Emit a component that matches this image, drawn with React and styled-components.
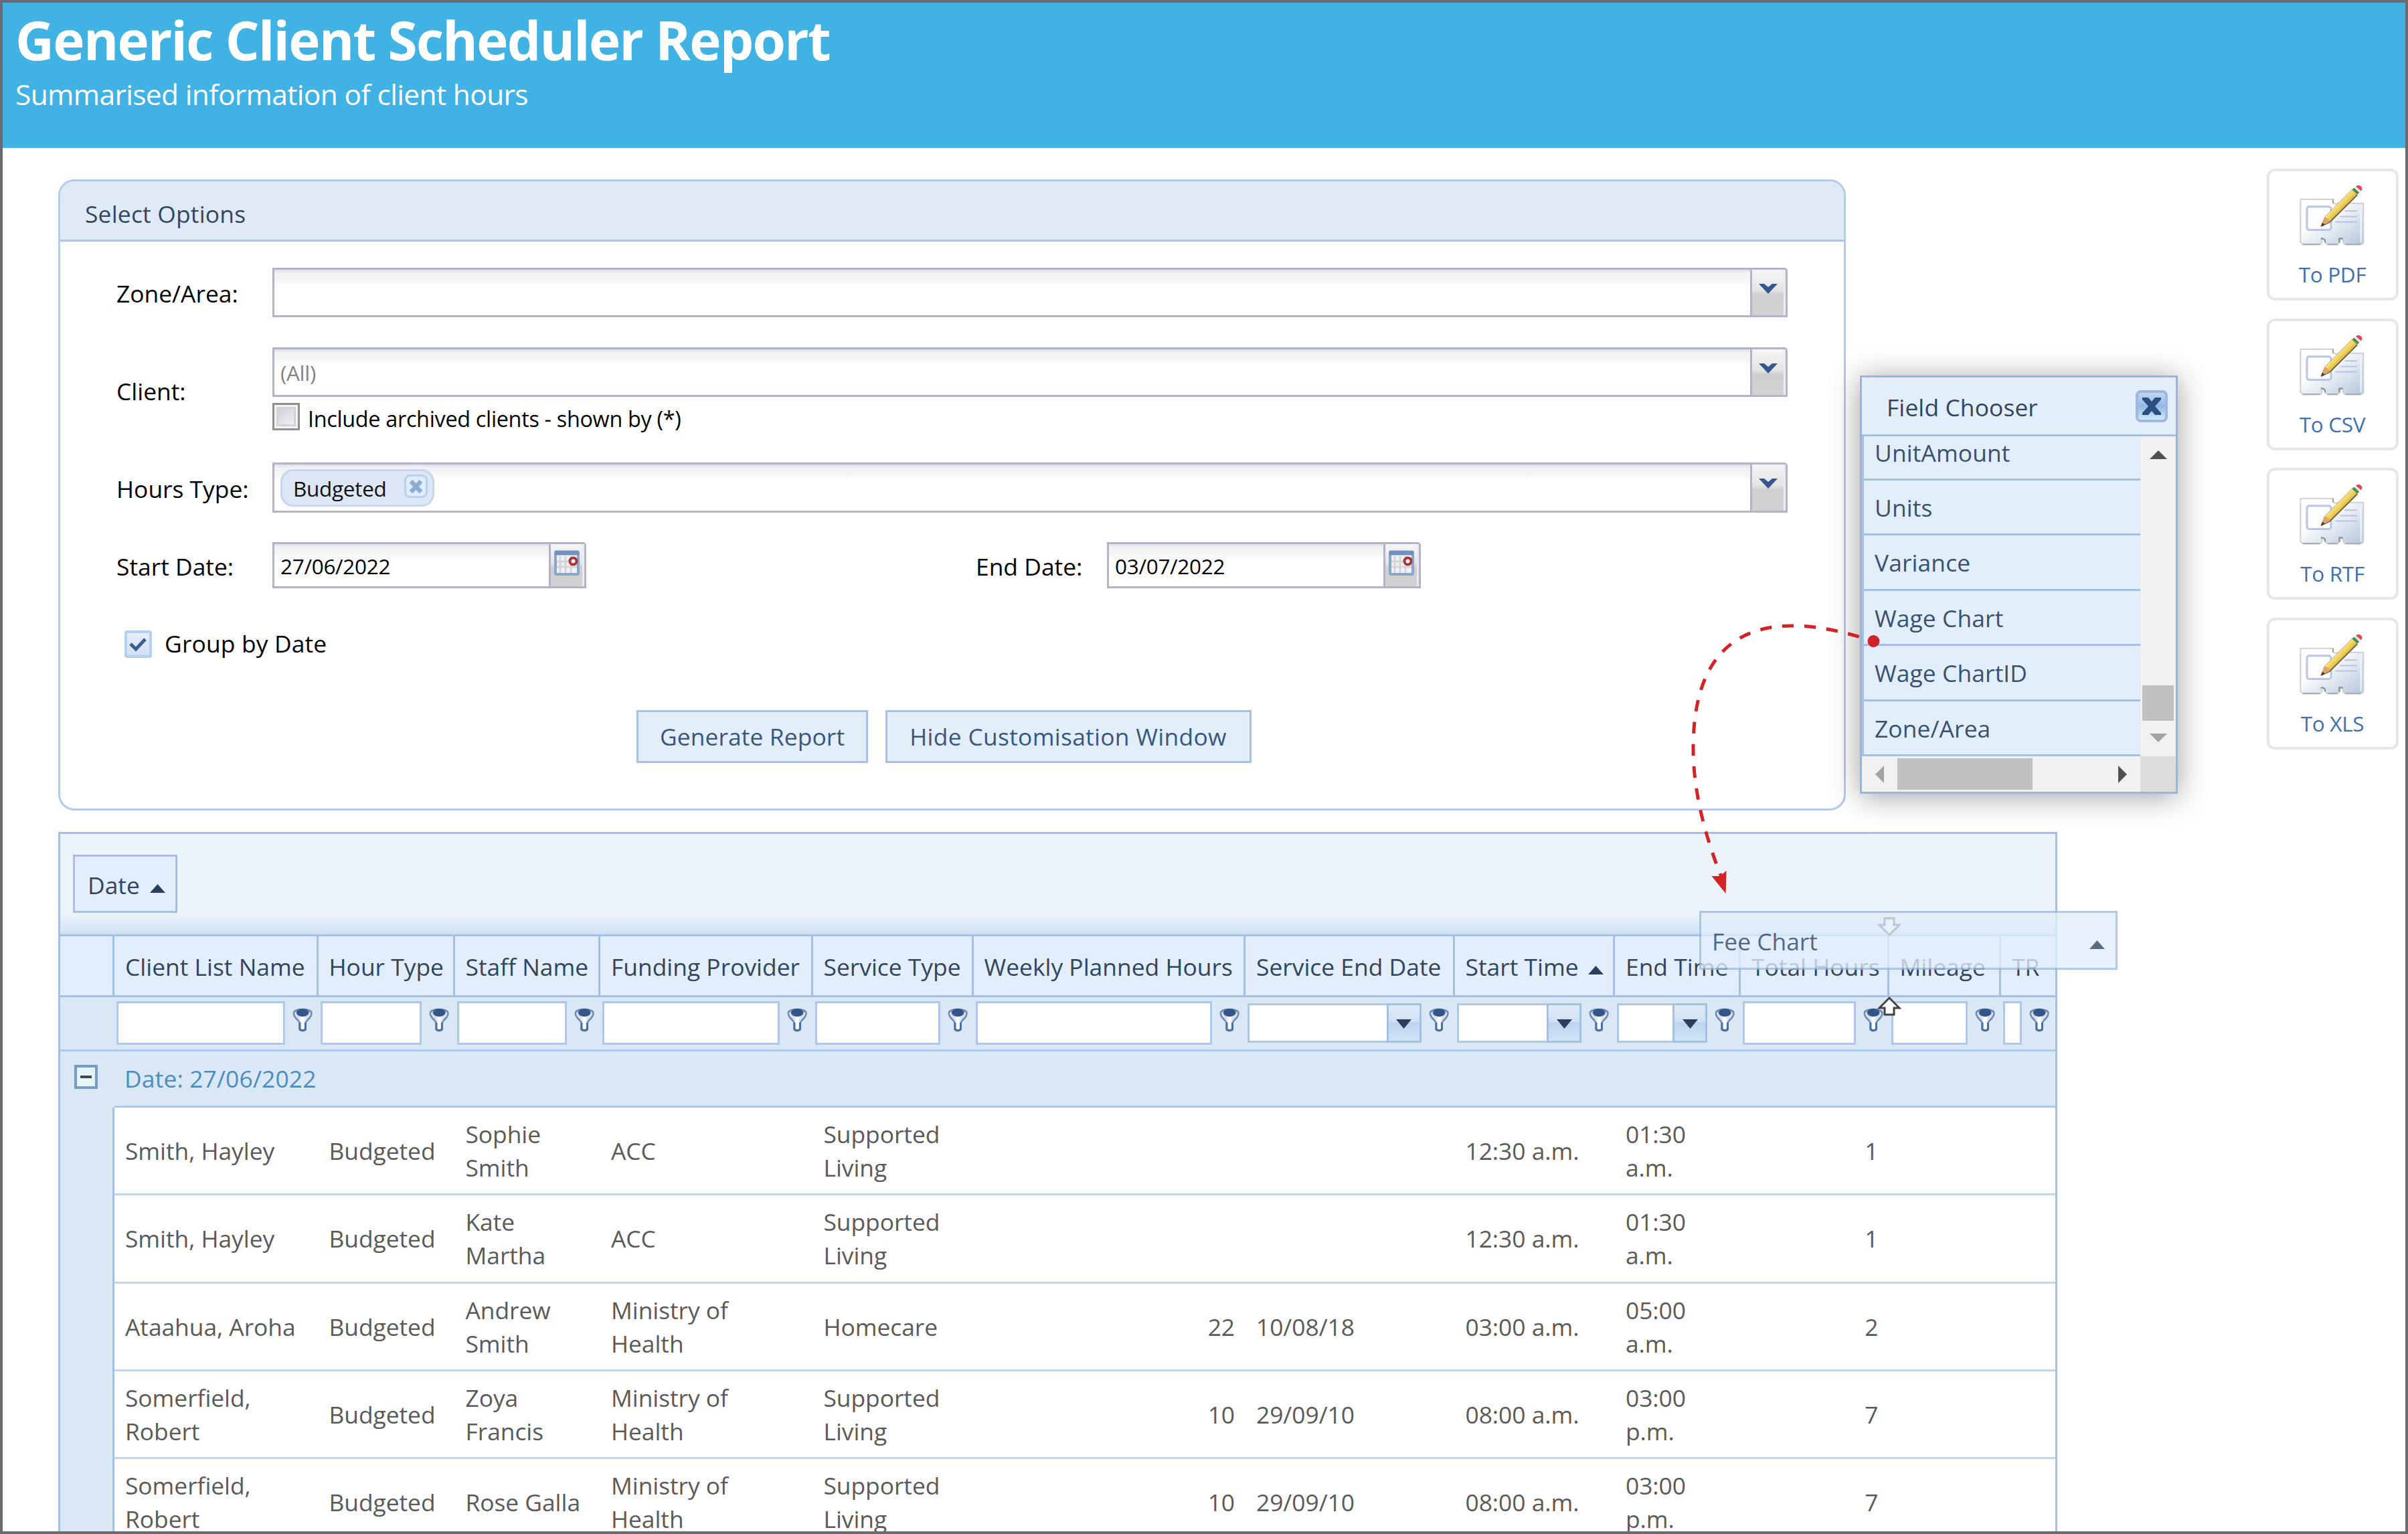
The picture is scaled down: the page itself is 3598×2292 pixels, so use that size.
import React, { useState } from 'react'
import styled, { createGlobalStyle, css } from 'styled-components'

const columns = [
  { title: 'Client List Name', width: 304.5, filter: 'text' },
  { title: 'Hour Type', width: 204, filter: 'text' },
  { title: 'Staff Name', width: 217.5, filter: 'text' },
  { title: 'Funding Provider', width: 317.5, filter: 'text' },
  { title: 'Service Type', width: 240, filter: 'text' },
  { title: 'Weekly Planned Hours', width: 406.5, filter: 'text', right: true },
  { title: 'Service End Date', width: 312.5, filter: 'combo' },
  { title: 'Start Time', width: 239.5, filter: 'combo', sorted: true },
  { title: 'End Time', width: 188, filter: 'combo' },
  { title: 'Total Hours', width: 221.5, filter: 'text', right: true },
  { title: 'Mileage', width: 167.5, filter: 'text' },
  { title: 'TR', width: 81, filter: 'text' },
]

const template = '81px ' + columns.map((c) => c.width + 'px').join(' ')

const rows = [
  ['Smith, Hayley', 'Budgeted', 'Sophie Smith', 'ACC', 'Supported Living', '', '', '12:30 a.m.', '01:30 a.m.', '1', '', ''],
  ['Smith, Hayley', 'Budgeted', 'Kate Martha', 'ACC', 'Supported Living', '', '', '12:30 a.m.', '01:30 a.m.', '1', '', ''],
  ['Ataahua, Aroha', 'Budgeted', 'Andrew Smith', 'Ministry of Health', 'Homecare', '22', '10/08/18', '03:00 a.m.', '05:00 a.m.', '2', '', ''],
  ['Somerfield, Robert', 'Budgeted', 'Zoya Francis', 'Ministry of Health', 'Supported Living', '10', '29/09/10', '08:00 a.m.', '03:00 p.m.', '7', '', ''],
  ['Somerfield, Robert', 'Budgeted', 'Rose Galla', 'Ministry of Health', 'Supported Living', '10', '29/09/10', '08:00 a.m.', '03:00 p.m.', '7', '', ''],
]

const fields = ['UnitAmount', 'Units', 'Variance', 'Wage Chart', 'Wage ChartID', 'Zone/Area']

const exportsList = ['To PDF', 'To CSV', 'To RTF', 'To XLS']

const GlobalStyle = createGlobalStyle`
  *{
    box-sizing:border-box;
  }
  body{
    margin:0;
    background:#fff;
    font-family:"Open Sans", "Noto Sans", sans-serif;
    font-size:35.4px;
    line-height:50px;
    color:#000;
  }
`

const Page = styled.div`
  position:relative;
  width:3598px;
  height:2292px;
  overflow:hidden;
  border:4px solid #6a6a6f;
  background:#fff;
`

const Banner = styled.header`
  height:217px;
  padding:2px 0 0 19px;
  background:#40b2e4;
  color:#fff;
  h1{
    margin:0;
    font-size:80px;
    font-weight:700;
    line-height:106px;
    letter-spacing:-1.75px;
  }
  p{
    margin:0;
    font-size:42.5px;
    line-height:58px;
    letter-spacing:-0.65px;
  }
`

const Body = styled.div`
  display:flex;
  justify-content:space-between;
  align-items:flex-start;
  padding:31px 10px 0 83px;
`

const Main = styled.main`
  width:2987px;
  padding-top:16px;
`

const Panel = styled.section`
  width:2671px;
  height:943px;
  border:3px solid #b0cbeb;
  border-radius:24px;
  overflow:hidden;
`

const PanelTitle = styled.div`
  height:90px;
  padding:23px 0 0 37px;
  border-bottom:3px solid #a9c7ea;
  background:#e0eaf6;
  color:#34475e;
  letter-spacing:0.2px;
`

const Form = styled.div`
  padding:39px 84px 0 84px;
`

const FormRow = styled.div`
  display:flex;
  align-items:center;
  height:${(p) => p.$height}px;
  margin-bottom:${(p) => p.$gap}px;
`

const Label = styled.label`
  width:${(p) => p.$width || 233}px;
  flex-shrink:0;
  padding-top:${(p) => p.$drop || 0}px;
`

const Stack = styled.div`
  display:flex;
  flex-direction:column;
  gap:10px;
  flex:1;
`

const Field = styled.div`
  display:flex;
  align-items:stretch;
  width:${(p) => (p.$date ? '469px' : '2264px')};
  height:${(p) => p.$height || 74}px;
  border:3px solid #b3b4c9;
  border-top-right-radius:5px;
  background:linear-gradient(#dde1e5 0, #f0f2f3 5px, #f4f6f6 15px, #fff 24px);
`

const FieldText = styled.div`
  flex:1;
  display:flex;
  align-items:center;
  padding:${(p) => (p.$chip ? '0 0 0 9px' : '2px 0 0 9px')};
  font-size:31.5px;
  letter-spacing:-0.3px;
  color:${(p) => (p.$muted ? '#838383' : '#000')};
`

const FieldButton = styled.button`
  width:53px;
  padding:0 2px 0 0;
  border:0;
  border-left:3px solid #b3b4c9;
  background:linear-gradient(#f6f6f6, #e4e4e4 45%, #cfcfcf 55%, #d2d2d2);
  box-shadow:inset -3px 0 0 #ececec;
  display:flex;
  justify-content:center;
  svg{
    margin-top:${(p) => (p.$date ? 8 : 20)}px;
  }
`

const Chip = styled.span`
  display:flex;
  align-items:center;
  justify-content:space-between;
  width:230px;
  height:56px;
  padding:2px 7px 0 16px;
  border:3px solid #c6d6f0;
  border-radius:19px;
  background:#dce6f5;
  color:#111;
  svg{
    margin-top:-6px;
  }
`

const CheckLine = styled.div`
  display:flex;
  align-items:center;
  gap:12px;
  height:40px;
  font-size:32.4px;
  letter-spacing:-0.32px;
  span:last-child{
    padding-top:5px;
  }
`

const ArchiveBox = styled.span`
  width:41px;
  height:41px;
  border:3px solid #8f8f8f;
  background:linear-gradient(135deg, #c6cad6, #f8f8f8) padding-box;
  box-shadow:inset 0 0 0 3px #f3f3f3, inset 0 0 0 6px #d3d3d6;
`

const GroupBox = styled.span`
  display:flex;
  align-items:center;
  justify-content:center;
  width:41px;
  height:41px;
  margin-left:12px;
  border:4px solid #b6cfee;
  border-radius:4px;
  background:linear-gradient(#e6f0fb, #d0e0f4);
`

const GroupLabel = styled.span`
  padding:0 0 3px 19px;
  letter-spacing:0.15px;
`

const Actions = styled.div`
  display:flex;
  gap:25.5px;
  padding-left:777px;
`

const Button = styled.button`
  width:${(p) => p.$width}px;
  height:79px;
  padding:0 0 1px;
  border:3px solid #a4c1e8;
  background:#e2effb;
  color:#3a5680;
  font:inherit;
  letter-spacing:${(p) => p.$tracking || 0.1}px;
`

const Grid = styled.section`
  margin-top:32px;
  width:2987px;
  border:3px solid #a3c0e7;
  border-bottom:0;
  color:#32455e;
`

const GroupPanel = styled.div`
  height:153px;
  padding:31px 0 0 19px;
  border-bottom:3px solid #a3c0e7;
  background:linear-gradient(#ecf3fb 0, #ecf3fb 120px, #dfebf8 133px, #cde2f5 150px);
`

const GroupTag = styled.div`
  display:flex;
  align-items:center;
  gap:15px;
  width:156px;
  height:87px;
  padding:2px 0 0 19px;
  border:3px solid #a3c0e7;
  background:#e2eefb;
  svg{
    margin-top:12px;
  }
`

const HeadRow = styled.div`
  display:grid;
  grid-template-columns:${template};
  height:90.5px;
  border-bottom:3px solid #a3c0e7;
  background:#e2eefb;
`

const HeadCell = styled.div`
  display:flex;
  align-items:center;
  padding:2px 0 0 16px;
  border-right:3px solid #a3c0e7;
  white-space:nowrap;
  &:last-child{
    border-right:0;
  }
  svg{
    margin:12px 0 0 14px;
  }
`

const FilterRow = styled.div`
  display:grid;
  grid-template-columns:${template};
  height:81.5px;
  border-bottom:3px solid #adc8ea;
  background:#dae8f6;
`

const FilterCell = styled.div`
  display:flex;
  align-items:flex-start;
  gap:11px;
  padding:6px 8px 0 3px;
  svg{
    flex-shrink:0;
  }
`

const FunnelIcon = styled.svg`
  width:31px;
  height:37px;
  margin-top:9px;
`

const inputLook = css`
  flex:1;
  min-width:0;
  border:3px solid #adc8ea;
  background:#fff;
`

const FilterInput = styled.input`
  ${inputLook}
  height:65px;
  padding:0;
`

const FilterCombo = styled.div`
  ${inputLook}
  display:flex;
  justify-content:flex-end;
  height:59px;
  margin-top:3px;
`

const ComboButton = styled.span`
  display:flex;
  align-items:center;
  justify-content:center;
  width:52px;
  margin:-3px;
  border:3px solid #a3c0e7;
  background:linear-gradient(#dfebf8, #d0e1f5 45%, #bdd4ef 50%, #cfe4f7);
  svg{
    margin-top:3px;
  }
`

const GroupRow = styled.div`
  display:grid;
  grid-template-columns:81px 1fr;
  height:84px;
  background:#dae8f6;
  color:#4b8dc0;
`

const Toggle = styled.div`
  padding:17px 0 0 21px;
`

const GroupTitle = styled.div`
  display:flex;
  align-items:center;
  padding:0 0 1px 15px;
  letter-spacing:0.15px;
  border-bottom:3px solid #adc8ea;
`

const DataRow = styled.div`
  display:grid;
  grid-template-columns:${template};
  height:131.25px;
  color:#5a5a5a;
`

const Indent = styled.div`
  border-right:3px solid #a3c0e7;
  background:#dae8f6;
`

const DataCell = styled.div`
  display:flex;
  align-items:center;
  justify-content:${(p) => (p.$right ? 'flex-end' : 'flex-start')};
  padding:${(p) => (p.$right ? '0 16px 0 0' : '0 28px 0 16px')};
  border-bottom:3px solid #c2d7f0;
  letter-spacing:-0.05px;
`

const Exports = styled.aside`
  display:flex;
  flex-direction:column;
  gap:26.5px;
`

const ExportCard = styled.button`
  display:flex;
  flex-direction:column;
  align-items:center;
  width:197px;
  height:197px;
  padding:20px 1px 0 0;
  border:4px solid #e9e6e6;
  border-radius:12px;
  background:#fff;
  color:#3f70ac;
  font:inherit;
  font-size:31.5px;
  letter-spacing:-0.3px;
  span{
    margin-top:21px;
    line-height:42px;
  }
`

// floating customisation window
const Chooser = styled.div`
  position:absolute;
  left:2775px;
  top:557px;
  width:475px;
  height:625px;
  border:3px solid #94b6e2;
  background:#e2effb;
  box-shadow:0 4px 42px rgba(0, 0, 0, 0.38);
  color:#3a5170;
`

const ChooserTitle = styled.div`
  display:flex;
  justify-content:space-between;
  align-items:center;
  height:88px;
  padding:2px 11px 2px 37px;
  border-bottom:3px solid #a3c0e7;
  color:#32455e;
  letter-spacing:0.1px;
  span{
    padding-top:2px;
  }
`

const ChooserBody = styled.div`
  display:grid;
  grid-template-columns:416px 53px;
  grid-template-rows:478px 53px;
`

const FieldList = styled.div`
  display:flex;
  flex-direction:column;
  justify-content:flex-end;
  overflow:hidden;
  border-left:3px solid #a3c0e7;
`

const FieldItem = styled.div`
  flex-shrink:0;
  height:82.4px;
  padding:15px 0 0 16px;
  border-bottom:3px solid #a3c0e7;
  letter-spacing:0.1px;
`

const VerticalBar = styled.div`
  display:flex;
  flex-direction:column;
  align-items:center;
  padding:21px 0;
  background:#f1f1f1;
`

const HorizontalBar = styled.div`
  display:flex;
  align-items:center;
  padding:0 20px;
  background:#f1f1f1;
`

const VerticalThumb = styled.span`
  width:47px;
  height:53px;
  margin:338px 0 19px;
  background:#c1c1c1;
`

const HorizontalThumb = styled.span`
  width:202px;
  height:47px;
  margin:0 auto 0 20px;
  background:#c1c1c1;
`

const BarCorner = styled.div`
  background:#dcdcdc;
`

const DragCell = styled.div`
  position:absolute;
  left:2535px;
  top:1357px;
  width:625px;
  height:88px;
  display:flex;
  align-items:center;
  justify-content:space-between;
  padding:2px 16px 0 16px;
  border:3px solid #98b9e6;
  background:#e2eefb;
  color:#2a4166;
  opacity:0.77;
  svg{
    margin-top:11px;
  }
`

const DropArrow = styled.svg`
  position:absolute;
  left:2801px;
  top:${(p) => p.$top}px;
  width:36px;
  height:30px;
`

const Annotation = styled.svg`
  position:absolute;
  left:2500px;
  top:900px;
  width:340px;
  height:460px;
`

const Triangle = ({ w = 23, h = 13, dir = 'up', color = '#2a3f5d' }) => {
  const points = {
    up: `0,${h} ${w / 2},0 ${w},${h}`,
    down: `0,0 ${w},0 ${w / 2},${h}`,
    left: `${w},0 ${w},${h} 0,${h / 2}`,
    right: `0,0 ${w},${h / 2} 0,${h}`,
  }
  return (
    <svg width={w} height={h} viewBox={`0 0 ${w} ${h}`}>
      <polygon points={points[dir]} fill={color} />
    </svg>
  )
}

const Chevron = () => (
  <svg width="30" height="17" viewBox="0 0 30 17">
    <path d="M1 1H9L15 6L21 1H29L15 16Z" fill="#35568f" />
  </svg>
)

const Calendar = () => (
  <svg width="40" height="40" viewBox="0 0 40 40">
    <rect x="3" y="4" width="34" height="33" rx="2" fill="#f2f2f4" stroke="#8aa6cb" strokeWidth="4" />
    <rect x="1.5" y="1.5" width="37" height="7" rx="2" fill="#6f92bf" />
    <path d="M10 10V35M18 10V35M26 10V35M5 18H35M5 26H35" stroke="#d5d5d9" strokeWidth="3" />
    <circle cx="29.500" cy="17.500" r="5" fill="#fff" stroke="#a8343c" strokeWidth="4" />
  </svg>
)

const Funnel = () => (
  <FunnelIcon viewBox="1070 135 94 110">
    <defs>
      <linearGradient id="funnel" x1="0" x2="1">
        <stop offset="0" stopColor="#a3b5cf" />
        <stop offset="0.5" stopColor="#ffffff" />
        <stop offset="1" stopColor="#a3b5cf" />
      </linearGradient>
    </defs>
    <path
      d="M1076 160C1074 138 1158 138 1156 160C1158 184 1129 192 1129 208V232C1129 243 1103 243 1103 232V208C1103 192 1074 184 1076 160Z"
      fill="url(#funnel)"
      stroke="#6f8bb5"
      strokeWidth="8"
    />
    <ellipse cx="1116" cy="158" rx="28" ry="18" fill="#33558a" />
    <path d="M1082 158Q1083 172 1095 180M1150 158Q1149 172 1137 180" fill="none" stroke="#dfe6f0" strokeWidth="6" />
    <path d="M1103 204V234Q1116 243 1129 234V204" fill="none" stroke="#4c6fa1" strokeWidth="9" />
  </FunnelIcon>
)

const CardPencil = () => (
  <svg width="100" height="92" viewBox="285 225 300 275">
    <defs>
      <linearGradient id="card" x1="0" y1="0" x2="1" y2="1">
        <stop offset="0.35" stopColor="#ffffff" />
        <stop offset="1" stopColor="#b4c6dc" />
      </linearGradient>
      <linearGradient id="pencil" x1="0" y1="0" x2="1" y2="1">
        <stop offset="0.35" stopColor="#fdf6bd" />
        <stop offset="0.52" stopColor="#ecca4c" />
        <stop offset="0.68" stopColor="#8f6c2e" />
      </linearGradient>
    </defs>
    <path
      d="M292 290H438V306Q450 314 462 308H574V486Q570 492 560 492H492L482 482V468H468V482L460 492H412L404 484V468H384Q392 478 386 488L380 492H304L292 482Z"
      fill="url(#card)"
      stroke="#cdd1d0"
      strokeWidth="6"
    />
    <path d="M302 492H378M414 492H458M494 492H562" stroke="#a9afad" strokeWidth="7" />
    <path d="M438 290V308" stroke="#9aa09e" strokeWidth="6" />
    <path d="M384 465Q404 466 402 484M466 484V466H482" fill="none" stroke="#8d9492" strokeWidth="7" />
    <rect x="321" y="323" width="108" height="104" rx="10" fill="#fdfeff" stroke="#b9c5e6" strokeWidth="9" />
    <path d="M490 342H546M470 367H546M448 391H546" stroke="#bcc1e2" strokeWidth="6" />
    <path d="M563 320V482" stroke="#eff7ff" strokeWidth="6" />
    <path d="M384 411L400 370L523 246L547 268L424 390Z" fill="url(#pencil)" stroke="#a58345" strokeWidth="2" />
    <path d="M384 411L424 392L547 270" fill="none" stroke="#6d5a3c" strokeWidth="5" />
    <path d="M384 411L400 370Q416 372 424 390Z" fill="#e0a66e" />
    <path d="M384 411L390 395L401 403Z" fill="#3a3230" />
    <path d="M523 246L533 238L556 260L547 268Z" fill="#3f8f5b" />
    <path d="M533 238L540 232L563 252L556 260Z" fill="#e8e8ec" />
    <path d="M540 232Q552 222 564 232Q573 244 563 252Z" fill="#dd4a55" />
  </svg>
)

const CloseIcon = () => (
  <svg width="50" height="50" viewBox="0 0 50 50">
    <defs>
      <linearGradient id="close" x1="0" y1="0" x2="0" y2="1">
        <stop offset="0" stopColor="#c3d9f3" />
        <stop offset="0.5" stopColor="#93bbe6" />
        <stop offset="1" stopColor="#cdeffc" />
      </linearGradient>
    </defs>
    <rect x="3" y="3" width="44" height="44" rx="6" fill="url(#close)" stroke="#a5b5e0" strokeWidth="4" />
    <path d="M11 12H20L25 18L30 12H39V15L30 25L39 35V38H30L25 32L20 38H11V35L20 25L11 15Z" fill="#2c4f7f" />
  </svg>
)

const ChipClose = () => (
  <svg width="35" height="35" viewBox="0 0 35 35">
    <rect x="1.500" y="1.500" width="32" height="32" rx="7" fill="#e0ecfa" stroke="#b8d1ef" strokeWidth="3" />
    <path d="M10 10L25 26M25 10L10 26" stroke="#8fabd4" strokeWidth="6.500" />
  </svg>
)

const Minus = () => (
  <svg width="35" height="36" viewBox="0 0 35 36">
    <rect x="2" y="2" width="31" height="32" fill="#e5f4f8" stroke="#779bc8" strokeWidth="4" />
    <rect x="9" y="16" width="17" height="4" fill="#474747" />
  </svg>
)

const Check = () => (
  <svg width="27" height="25" viewBox="0 0 27 25">
    <path d="M2 12L10 20L24 5" fill="none" stroke="#3c5f93" strokeWidth="5" />
  </svg>
)

const DateField = ({ value }) => (
  <Field $date $height={69}>
    <FieldText>{value}</FieldText>
    <FieldButton $date><Calendar /></FieldButton>
  </Field>
)

const Options = () => {
  const [grouped, setGrouped] = useState(true)
  return (
    <Panel>
      <PanelTitle>Select Options</PanelTitle>
      <Form>
        <FormRow $height={74} $gap={44}>
          <Label $drop={2}>Zone/Area:</Label>
          <Field>
            <FieldText />
            <FieldButton><Chevron /></FieldButton>
          </Field>
        </FormRow>
        <FormRow $height={125} $gap={48}>
          <Label $drop={7}>Client:</Label>
          <Stack>
            <Field>
              <FieldText $muted>(All)</FieldText>
              <FieldButton><Chevron /></FieldButton>
            </Field>
            <CheckLine>
              <ArchiveBox />
              <span>Include archived clients - shown by (*)</span>
            </CheckLine>
          </Stack>
        </FormRow>
        <FormRow $height={75} $gap={44}>
          <Label $drop={2}>Hours Type:</Label>
          <Field $height={75}>
            <FieldText $chip>
              <Chip>Budgeted <ChipClose /></Chip>
            </FieldText>
            <FieldButton><Chevron /></FieldButton>
          </Field>
        </FormRow>
        <FormRow $height={69} $gap={63}>
          <Label $drop={2}>Start Date:</Label>
          <Label as="div" $width={1051}>
            <DateField value="27/06/2022" />
          </Label>
          <Label $width={196} $drop={2}>End Date:</Label>
          <DateField value="03/07/2022" />
        </FormRow>
        <FormRow $height={41} $gap={78} onClick={() => setGrouped(!grouped)}>
          <GroupBox>{grouped && <Check />}</GroupBox>
          <GroupLabel>Group by Date</GroupLabel>
        </FormRow>
        <Actions>
          <Button $width={346}>Generate Report</Button>
          <Button $width={547} $tracking={0.3}>Hide Customisation Window</Button>
        </Actions>
      </Form>
    </Panel>
  )
}

const ReportGrid = () => (
  <Grid>
    <GroupPanel>
      <GroupTag>Date <Triangle /></GroupTag>
    </GroupPanel>
    <HeadRow>
      <HeadCell />
      {columns.map((c) => (
        <HeadCell key={c.title}>{c.title}{c.sorted && <Triangle />}</HeadCell>
      ))}
    </HeadRow>
    <FilterRow>
      <div />
      {columns.map((c) => (
        <FilterCell key={c.title}>
          {c.filter === 'text' ? <FilterInput /> : (
            <FilterCombo>
              <ComboButton><Triangle dir="down" h={14} /></ComboButton>
            </FilterCombo>
          )}
          <Funnel />
        </FilterCell>
      ))}
    </FilterRow>
    <GroupRow>
      <Toggle><Minus /></Toggle>
      <GroupTitle>Date: 27/06/2022</GroupTitle>
    </GroupRow>
    {rows.map((row, i) => (
      <DataRow key={i}>
        <Indent />
        {row.map((value, j) => (
          <DataCell key={j} $right={columns[j].right}>{value}</DataCell>
        ))}
      </DataRow>
    ))}
  </Grid>
)

const FieldChooser = () => (
  <Chooser>
    <ChooserTitle><span>Field Chooser</span> <CloseIcon /></ChooserTitle>
    <ChooserBody>
      <FieldList>
        {fields.map((f) => <FieldItem key={f}>{f}</FieldItem>)}
      </FieldList>
      <VerticalBar>
        <Triangle w={26} h={13} color="#505050" />
        <VerticalThumb />
        <Triangle w={26} h={13} dir="down" color="#a3a3a3" />
      </VerticalBar>
      <HorizontalBar>
        <Triangle w={13} h={26} dir="left" color="#a3a3a3" />
        <HorizontalThumb />
        <Triangle w={13} h={26} dir="right" color="#505050" />
      </HorizontalBar>
      <BarCorner />
    </ChooserBody>
  </Chooser>
)

const App = () => (
  <>
    <GlobalStyle />
    <Page>
      <Banner>
        <h1>Generic Client Scheduler Report</h1>
        <p>Summarised information of client hours</p>
      </Banner>
      <Body>
        <Main>
          <Options />
          <ReportGrid />
        </Main>
        <Exports>
          {exportsList.map((e) => (
            <ExportCard key={e}>
              <CardPencil />
              <span>{e}</span>
            </ExportCard>
          ))}
        </Exports>
      </Body>
      <FieldChooser />
      <DropArrow $top={1366} viewBox="0 0 36 30">
        <path d="M11 2H25V12H33L18 27L3 12H11Z" fill="#fff" stroke="#444" strokeWidth="3" />
      </DropArrow>
      <DropArrow $top={1484} viewBox="0 0 36 30">
        <path d="M11 28H25V18H33L18 3L3 18H11Z" fill="#fff" stroke="#444" strokeWidth="3" />
      </DropArrow>
      <DragCell>Fee Chart <Triangle /></DragCell>
      <Annotation viewBox="2504 904 340 460">
        <path
          d="M2799 958C2650 908 2530 930 2530 1118C2530 1190 2552 1260 2572 1310"
          fill="none"
          stroke="#d22328"
          strokeWidth="5"
          strokeDasharray="17.300 15.800"
          strokeDashoffset="11"
        />
        <circle cx="2799.500" cy="958" r="9" fill="#d22328" />
        <path d="M2578.600 1335L2557.500 1309L2570 1309L2579.500 1301Z" fill="#d22328" />
      </Annotation>
    </Page>
  </>
)

export default App
